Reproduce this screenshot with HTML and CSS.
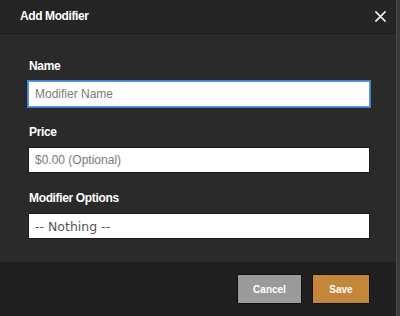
FILE: index.html
```html
<!DOCTYPE html>
<html>
<head>
<meta charset="utf-8">
<link rel="stylesheet" href="styles.css">
</head>
<body>
<div class="modal">
  <div class="modal-header">
    <span class="modal-title">Add Modifier</span>
    <span class="close">
      <svg width="11" height="11" viewBox="0 0 11 11"><path d="M1 1L10 10M10 1L1 10" stroke="#f2f2f2" stroke-width="1.7" stroke-linecap="square"/></svg>
    </span>
  </div>
  <div class="modal-body">
    <div class="field">
      <label class="label">Name</label>
      <div class="input focused"><span class="placeholder">Modifier Name</span></div>
    </div>
    <div class="field">
      <label class="label">Price</label>
      <div class="input"><span class="placeholder">$0.00 (Optional)</span></div>
    </div>
    <div class="field">
      <label class="label">Modifier Options</label>
      <div class="input select"><span class="select-text">-- Nothing --</span></div>
    </div>
  </div>
  <div class="modal-footer">
    <button class="btn btn-cancel">Cancel</button>
    <button class="btn btn-save">Save</button>
  </div>
</div>
</body>
</html>
```
FILE: styles.css
```css
html, body {
  margin: 0;
  padding: 0;
  background: #3a3a3a;
  font-family: "Liberation Sans", Arial, sans-serif;
}
.modal {
  width: 396px;
  height: 316px;
  border-right: 1px solid #4a4a4a;
  display: flex;
  flex-direction: column;
  background: #2a2a2a;
}
.modal-header {
  height: 33px;
  border-bottom: 1px solid #1c1c1c;
  background: #252525;
  display: flex;
  align-items: center;
  justify-content: space-between;
  padding: 0 10px 0 20px;
}
.modal-title {
  color: #ffffff;
  font-weight: bold;
  font-size: 12px;
  letter-spacing: -0.4px;
  margin-top: -1px;
}
.close {
  display: flex;
  margin-top: -1px;
}
.modal-body {
  padding: 24px 26px 23px 28px;
  background: #2a2a2a;
  display: flex;
  flex-direction: column;
  gap: 17px;
}
.field {
  display: flex;
  flex-direction: column;
  gap: 7px;
}
.label {
  color: #ffffff;
  font-weight: bold;
  font-size: 12px;
  letter-spacing: -0.35px;
  line-height: 16px;
  padding-left: 1px;
}
.input {
  height: 24px;
  background: #ffffff;
  border: 1px solid #1a1a1a;
  display: flex;
  align-items: center;
  padding: 0 6px;
}
.input.focused {
  border: 1px solid #5a9be0;
  box-shadow: 0 0 0 1px #3d7fd0;
}
.placeholder {
  color: #7a7a7a;
  font-size: 12px;
}
.select-text {
  color: #555555;
  font-family: "DejaVu Sans", Verdana, sans-serif;
  font-size: 12.5px;
}
.modal-footer {
  flex: 1;
  background: #1f1f1f;
  display: flex;
  justify-content: flex-end;
  align-items: flex-start;
  padding: 12px 26px 0 0;
  gap: 10px;
}
.btn {
  height: 30px;
  border: 1px solid #111111;
  color: #ffffff;
  font-family: "Liberation Sans", Arial, sans-serif;
  font-weight: bold;
  font-size: 10px;
  padding: 0;
  margin: 0;
}
.btn-cancel {
  width: 65px;
  background: #9a9a9a;
}
.btn-save {
  width: 58px;
  background: #c4863a;
}
```
